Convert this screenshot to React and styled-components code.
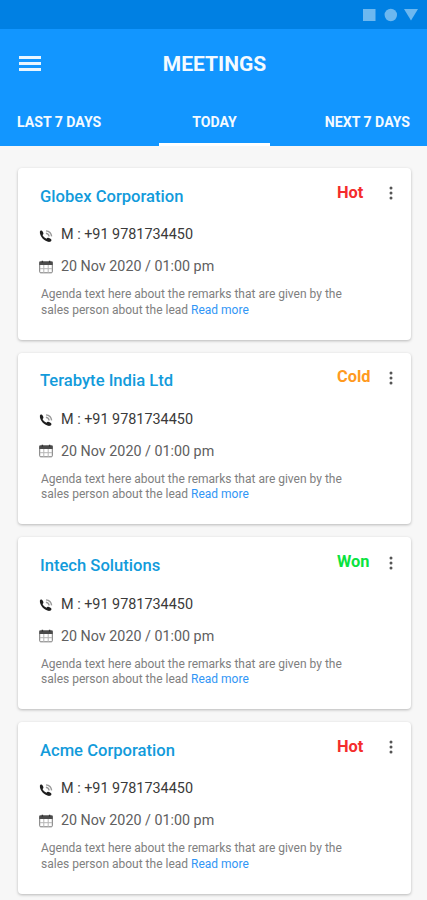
import styled, { createGlobalStyle } from "styled-components";

const GlobalStyle = createGlobalStyle`
  * {
    box-sizing: border-box;
  }

  body {
    margin: 0;
    height: 900px;
    overflow: hidden;
    background: #f7f7f7;
    font-family: Roboto, "Liberation Sans", sans-serif;
  }
`;

const Screen = styled.div`
  width: 427px;
  height: 900px;
  overflow: hidden;
`;

const StatusBar = styled.div`
  display: flex;
  justify-content: flex-end;
  height: 29px;
  padding: 8px 8px 0 0;
  background: #0080e3;
`;

const Header = styled.header`
  height: 117px;
  background: #1296ff;
  color: #f4faff;
`;

const Toolbar = styled.div`
  display: grid;
  grid-template-columns: 60px 1fr 60px;
  align-items: center;
  height: 69px;
  padding-left: 19px;
  padding-right: 17px;
`;

const MenuButton = styled.button`
  display: flex;
  flex-direction: column;
  gap: 3px;
  width: 22px;
  padding: 0;
  border: 0;
  background: none;
`;

const MenuLine = styled.span`
  height: 3px;
  background: #e9f6ff;
`;

const PageTitle = styled.h1`
  margin: 0;
  text-align: center;
  font-size: 21px;
  font-weight: 700;
  line-height: 24px;
`;

const Tabs = styled.nav`
  display: grid;
  grid-template-columns: 159px 111px 157px;
  height: 48px;
`;

const Tab = styled.a`
  padding: 14px 17px 0;
  border-bottom: 3px solid ${({ $active }) => ($active ? "#fff" : "transparent")};
  font-size: 14.1px;
  font-weight: 700;
  line-height: 20px;
  white-space: nowrap;
  text-align: ${({ $align }) => $align};
`;

const MeetingList = styled.main`
  display: flex;
  flex-direction: column;
  gap: 13.2px;
  padding: 22px 16px 0 18px;
`;

const Card = styled.article`
  display: flex;
  flex-shrink: 0;
  justify-content: space-between;
  height: 171.5px;
  padding-left: 22px;
  border-radius: 4px;
  background: #fff;
  box-shadow: 0 1px 3px rgba(0, 0, 0, 0.26);
`;

const Details = styled.div`
  width: 297px;
  padding-top: 18.5px;
  white-space: nowrap;
`;

const Company = styled.h2`
  margin: 0 0 18.7px;
  color: #129bdb;
  font-size: 16.6px;
  font-weight: 500;
  line-height: 20px;
`;

const InfoRow = styled.div`
  display: flex;
  align-items: center;
  height: 20px;
  margin-bottom: 11px;
  color: ${({ $color }) => $color};
  font-size: ${({ $size }) => $size}px;
  line-height: 20px;

  svg {
    margin: 1px 8px 0 -1px;
  }
`;

const Agenda = styled.p`
  margin: 0 0 0 1px;
  color: #808080;
  font-size: 12px;
  line-height: 15.4px;
`;

const ReadMore = styled.a`
  color: #3196f5;
`;

const Actions = styled.div`
  display: flex;
  flex-shrink: 0;
  align-items: flex-start;
  justify-content: space-between;
  width: 74px;
  padding: 14.8px 18px 0 0;
`;

const Status = styled.span`
  color: ${({ $color }) => $color};
  font-size: 16.4px;
  font-weight: 700;
  line-height: 20px;
`;

const MoreButton = styled.button`
  display: flex;
  padding: 3.4px 0 0;
  border: 0;
  background: none;
`;

const statusColors = {
  Hot: "#f42c2c",
  Cold: "#ff9a1f",
  Won: "#0be33f",
};

const meetings = [
  { company: "Globex Corporation", status: "Hot" },
  { company: "Terabyte India Ltd", status: "Cold" },
  { company: "Intech Solutions", status: "Won" },
  { company: "Acme Corporation", status: "Hot" },
];

function StatusIcons() {
  return (
    <svg width="56" height="14" viewBox="0 0 56 14" fill="#6db8f0">
      <path d="M0 1h12.5v12H0z" />
      <circle cx="27.8" cy="7" r="6.2" />
      <path d="M41 1h14l-7 11.5z" />
    </svg>
  );
}

function PhoneIcon() {
  return (
    <svg width="14" height="14" viewBox="0 0 14 14">
      <path
        d="M.9 2.6C1.1 1.7 2 1.2 2.6 1.5c.9.4 1.7 1.9 1.8 2.9.1.7-.4 1.1-.9 1.5.8 1.6 2.3 3 4 3.8.5-.6.9-1 1.6-.9 1.2.2 2.9 1 3.3 1.9.3.8-.4 1.8-1.4 2.1C6.6 13.7.2 7.7.9 2.6z"
        fill="#1f1f1f"
      />
      <path
        d="M7 1.9c3 .3 5.3 2.5 5.6 5.5M6.9 4.3c1.7.2 3 1.5 3.2 3.2"
        fill="none"
        stroke="#999"
        strokeWidth="1.4"
      />
    </svg>
  );
}

function CalendarIcon() {
  return (
    <svg width="14" height="14" viewBox="0 0 14 14">
      <rect x=".7" y="1.9" width="12.6" height="10.9" rx="1" fill="#fff" stroke="#777" />
      <path d="M.3 1.5h13.4V5H.3z" fill="#4b4b4b" />
      <path d="M3.4.7v2M10.6.7v2" stroke="#333" strokeWidth="1.4" />
      <path d="M1 8.7h12M4.8 5v8M9.2 5v8" stroke="#b5b5b5" />
    </svg>
  );
}

function DotsIcon() {
  return (
    <svg width="4" height="14" viewBox="0 0 4 14" fill="#555">
      <circle cx="2" cy="2" r="1.5" />
      <circle cx="2" cy="7" r="1.5" />
      <circle cx="2" cy="12" r="1.5" />
    </svg>
  );
}

function MeetingCard({ company, status }) {
  return (
    <Card>
      <Details>
        <Company>{company}</Company>
        <InfoRow $color="#3a3a3a" $size={14.4}>
          <PhoneIcon />M : +91 9781734450
        </InfoRow>
        <InfoRow $color="#606060" $size={14.3}>
          <CalendarIcon />
          20 Nov 2020 / 01:00 pm
        </InfoRow>
        <Agenda>
          Agenda text here about the remarks that are given by the
          <br />
          sales person about the lead <ReadMore>Read more</ReadMore>
        </Agenda>
      </Details>
      <Actions>
        <Status $color={statusColors[status]}>{status}</Status>
        <MoreButton aria-label="More options">
          <DotsIcon />
        </MoreButton>
      </Actions>
    </Card>
  );
}

export default function App() {
  return (
    <Screen>
      <GlobalStyle />
      <StatusBar>
        <StatusIcons />
      </StatusBar>
      <Header>
        <Toolbar>
          <MenuButton aria-label="Open menu">
            <MenuLine />
            <MenuLine />
            <MenuLine />
          </MenuButton>
          <PageTitle>MEETINGS</PageTitle>
        </Toolbar>
        <Tabs>
          <Tab $align="left">LAST 7 DAYS</Tab>
          <Tab $align="center" $active>
            TODAY
          </Tab>
          <Tab $align="right">NEXT 7 DAYS</Tab>
        </Tabs>
      </Header>
      <MeetingList>
        {meetings.map((meeting) => (
          <MeetingCard key={meeting.company} {...meeting} />
        ))}
      </MeetingList>
    </Screen>
  );
}
